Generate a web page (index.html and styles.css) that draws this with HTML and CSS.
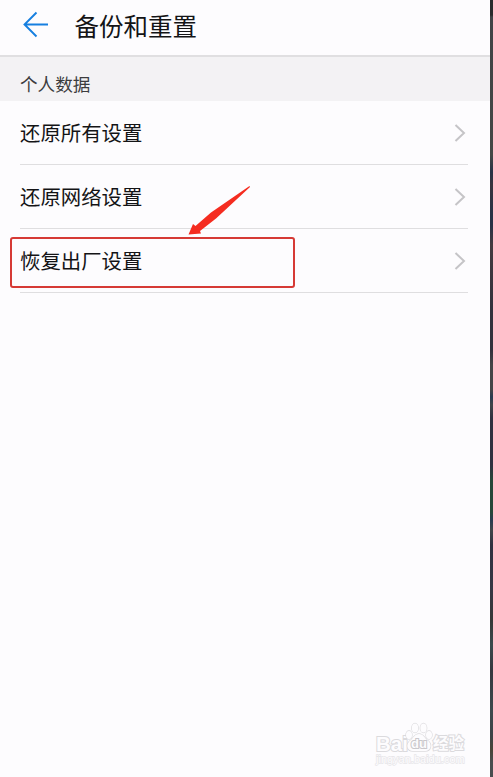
FILE: index.html
```html
<!DOCTYPE html>
<html lang="zh-CN">
    <head>
        <meta charset="utf-8">
        <title>备份和重置</title>
        <link rel="stylesheet" href="styles.css">
    </head>
    <body>
        <div class="screen">
            <header>
                <svg class="back" width="28" height="28" viewBox="0 0 28 28">
                    <path d="M27 14.500H3.500M15.500 2.500L3.500 14.500L15.500 26.500" />
                </svg>
                <h1>备份和重置</h1>
            </header>
            <h2>个人数据</h2>
            <ul>
                <li>
                    <span>还原所有设置</span>
                    <svg class="chevron" width="12" height="18" viewBox="0 0 12 18"><path d="M1.500 1L10 9L1.500 17" /></svg>
                </li>
                <li>
                    <span>还原网络设置</span>
                    <svg class="chevron" width="12" height="18" viewBox="0 0 12 18"><path d="M1.500 1L10 9L1.500 17" /></svg>
                </li>
                <li class="marked">
                    <span>恢复出厂设置</span>
                    <svg class="chevron" width="12" height="18" viewBox="0 0 12 18"><path d="M1.500 1L10 9L1.500 17" /></svg>
                    <div class="frame"></div>
                    <svg class="arrow" width="64" height="52" viewBox="0 0 64 52">
                        <path d="M62.500 1L63 2L29 33.500L13 46L14 48.500L1.500 49.500L6 39L8.500 41L24 27.500Z" />
                    </svg>
                </li>
            </ul>
            <div class="watermark">
                <div class="brand">
                    <span class="bai">Bai</span>
                    <svg class="paw" width="28" height="30" viewBox="0 0 28 30">
                        <ellipse cx="4" cy="13" rx="3" ry="4" />
                        <ellipse cx="10" cy="6" rx="3.200" ry="4.500" />
                        <ellipse cx="18.500" cy="6" rx="3.200" ry="4.500" />
                        <ellipse cx="24" cy="13" rx="3" ry="4" />
                        <path d="M14 12C10 12 9 15 6 18C0 22 2 29 8 29H20C26 29 28 22 22 18C19 15 18 12 14 12Z" />
                        <text x="14" y="26" text-anchor="middle">du</text>
                    </svg>
                    <span class="jingyan">经验</span>
                </div>
                <div class="url">jingyan.baidu.com</div>
            </div>
        </div>
        <div class="edge"></div>
    </body>
</html>
```
FILE: styles.css
```css
body {
    margin: 0;
    display: flex;
    height: 777px;
    overflow: hidden;
    background: #fdfcfe;
    color: #141416;
    font-family: "Noto Sans CJK SC", sans-serif;
}

.screen {
    position: relative;
    width: 490px;
}

.edge {
    width: 3px;
    background: linear-gradient(#292b2c 0, #292b2c 15px, #404346 17px, #454745 155px, #283246 172px, #38343e 185px, #283246 215px, #283246 225px, #443b40 245px, #33313c 310px, #33313c 350px, #454547 365px, #454547 390px, #293b50 397px, #414549 405px, #303140 418px, #303140 465px, #264739 480px, #264739 512px, #293b50 520px, #414549 530px, #303140 545px, #363744 590px, #363737 620px, #3b494c 645px, #35383f 670px, #3d494d 710px, #3d4347 735px, #494438 750px, #494d4f 762px);
}

header {
    display: flex;
    align-items: center;
    height: 55px;
    border-bottom: 2px solid #e0dfe1;
}

.back {
    margin: -7px 0 0 21px;
    fill: none;
    stroke: #167fe0;
    stroke-width: 1.9;
}

h1 {
    margin: -4px 0 0 25.5px;
    font-size: 24.5px;
    font-weight: 400;
    line-height: 36px;
}

h2 {
    box-sizing: border-box;
    height: 44px;
    margin: 0;
    padding: 11px 20px 0;
    background: #f3f2f4;
    color: #3c3c3e;
    font-size: 17.6px;
    font-weight: 400;
    line-height: 32px;
}

ul {
    list-style-type: none;
    margin: 0 22px 0 20px;
    padding: 0;
}

li {
    display: flex;
    align-items: center;
    justify-content: space-between;
    height: 63px;
    border-bottom: 1px solid #dfdee0;
    font-size: 20.4px;
}

li span {
    margin-top: -2px;
}

.chevron {
    margin-right: 2px;
    fill: none;
    stroke: #c5c4c7;
    stroke-width: 2;
}

.marked {
    position: relative;
}

/* highlight drawn over the row */
.frame {
    position: absolute;
    box-sizing: border-box;
    left: -10px;
    top: 8px;
    width: 285px;
    height: 51px;
    border: 2px solid #d63a35;
    border-radius: 3px;
}

.arrow {
    position: absolute;
    left: 167px;
    top: -44px;
}

.arrow path {
    fill: #f52c20;
}

.watermark {
    position: absolute;
    left: 376px;
    top: 722px;
    color: #fdfcfe;
    font-family: "Liberation Sans", "Noto Sans CJK SC", sans-serif;
    -webkit-text-stroke: 2px #dbdadd;
    paint-order: stroke fill;
}

.brand {
    display: flex;
    align-items: flex-end;
    height: 30px;
}

.bai {
    font-size: 20.5px;
    font-weight: 700;
    line-height: 17px;
    width: 29px;
}

.paw {
    flex: none;
    fill: #fdfcfe;
    stroke: #dbdadd;
    stroke-width: 1.3;
    -webkit-text-stroke: 0;
}

.paw text {
    font-size: 13px;
    font-weight: 700;
    fill: #fdfcfe;
    stroke: #c9c8cb;
    stroke-width: 2;
}

.jingyan {
    font-size: 15.5px;
    font-weight: 700;
    line-height: 17px;
}

.url {
    font-size: 11px;
    line-height: 14px;
    -webkit-text-stroke: 1.3px #e6e5e8;
}
```
